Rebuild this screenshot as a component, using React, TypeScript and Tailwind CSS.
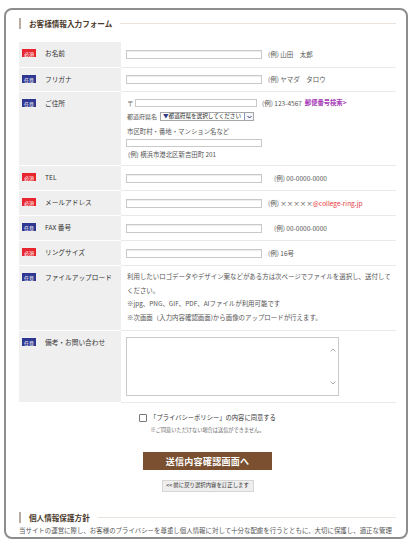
import type { ReactNode } from "react";

const jp = "font-['Noto_Sans_CJK_JP','Noto_Sans',sans-serif]";

function Badge({ req }: { req?: boolean }) {
  return (
    <span
      className={
        req
          ? "flex h-[8px] w-[14px] shrink-0 items-center justify-center bg-[#e8242e] text-[5px] leading-none text-white"
          : "flex h-[8px] w-[14px] shrink-0 items-center justify-center bg-[#2f3891] text-[5px] leading-none text-white"
      }
    >
      {req ? "必須" : "任意"}
    </span>
  );
}

function Row({
  req,
  label,
  height,
  cell,
  children,
}: {
  req?: boolean;
  label: string;
  height: string;
  cell: string;
  children: ReactNode;
}) {
  return (
    <div className={`flex ${height}`}>
      <div className="w-[102px] shrink-0 border-b border-white bg-[#efefef] pl-[3px] pt-[7px]">
        <div className="flex h-[8px] items-center gap-[9px]">
          <Badge req={req} />
          <span className="whitespace-nowrap text-[6.7px] leading-none text-[#333]">{label}</span>
        </div>
      </div>
      <div className={`flex-1 border-b border-[#e9e9e9] pl-[5px] ${cell}`}>{children}</div>
    </div>
  );
}

function Field({ w = "w-[136px]" }: { w?: string }) {
  return (
    <input
      type="text"
      className={`h-[9px] ${w} shrink-0 border border-[#c9c9c9] bg-white shadow-[inset_0_1px_1px_rgba(0,0,0,0.08)]`}
    />
  );
}

function Ex({ children, ml = "ml-[6px]" }: { children: ReactNode; ml?: string }) {
  return <span className={`${ml} whitespace-nowrap text-[6.5px] leading-none text-[#555]`}>{children}</span>;
}

function Heading({ text }: { text: string }) {
  return (
    <div className="flex h-[13px] items-center">
      <span className="h-[11px] w-[2px] bg-[#b9ada2]" />
      <span className="ml-[8px] whitespace-nowrap text-[7.6px] font-bold leading-none text-[#4b3a2c]">{text}</span>
      <span className="ml-[8px] h-px flex-1 bg-[#ebe3db]" />
    </div>
  );
}

export default function App() {
  return (
    <div className={`h-[546px] w-[417px] bg-white pl-[4px] pt-[8px] ${jp}`}>
      <div className="h-[531px] w-[404px] overflow-hidden rounded-[8px] border-2 border-[#8d8d8d] pl-[13px] pt-[7px]">
        <div className="w-[377px]">
          <Heading text="お客様情報入力フォーム" />

          <div className="mt-[12px]">
            <Row req label="お名前" height="h-[26px]" cell="flex items-center">
              <Field />
              <Ex>(例) 山田　太郎</Ex>
            </Row>
            <Row label="フリガナ" height="h-[24px]" cell="flex items-center">
              <Field />
              <Ex>(例) ヤマダ　タロウ</Ex>
            </Row>
            <Row label="ご住所" height="h-[74px]" cell="flex flex-col pt-[7px]">
              <div className="flex h-[8px] items-center">
                <span className="w-[9px] pl-[1px] text-[6.5px] leading-none text-[#666]">〒</span>
                <input
                  type="text"
                  className="h-[8px] w-[122px] border border-[#c9c9c9] bg-white"
                />
                <Ex ml="ml-[5px]">(例) 123-4567 </Ex>
                <span className="ml-[3px] whitespace-nowrap text-[6.3px] font-bold leading-none text-[#a437b5]">
                  郵便番号検索&gt;
                </span>
              </div>
              <div className="mt-[5px] flex h-[9px] items-center">
                <span className="w-[34px] pl-[1px] text-[6px] leading-none text-[#555]">都道府県名</span>
                <div className="flex h-[9px] w-[94px] items-center border border-[#a6a6a6] bg-white">
                  <span className="flex-1 whitespace-nowrap pl-[2px] text-[5.6px] leading-none text-[#222]">
                    <span className="text-[#2f3891]">▼</span>都道府県を選択してください
                  </span>
                  <span className="flex h-full w-[9px] items-center justify-center border-l border-[#8a96b8] bg-[#f4f6fb]">
                    <svg width="5" height="4" viewBox="0 0 5 4">
                      <path d="M0.5 1 L2.5 3 L4.5 1" fill="none" stroke="#2f3b6b" strokeWidth="1" />
                    </svg>
                  </span>
                </div>
              </div>
              <div className="mt-[7px] h-[8px] pl-[1px] text-[6.4px] leading-[8px] text-[#555]">
                市区町村・番地・マンション名など
              </div>
              <input
                type="text"
                className="mt-[3px] h-[8px] w-[136px] border border-[#c9c9c9] bg-white"
              />
              <div className="mt-[4px] h-[8px] pl-[2px] text-[6.4px] leading-[8px] text-[#555]">
                (例) 横浜市港北区新吉田町 201
              </div>
            </Row>
            <Row req label="TEL" height="h-[25px]" cell="flex items-center">
              <Field />
              <Ex ml="ml-[12px]">(例) 00-0000-0000</Ex>
            </Row>
            <Row req label="メールアドレス" height="h-[25px]" cell="flex items-center">
              <Field />
              <Ex>
                (例) ×××××<span className="text-[#e8383d]">@college-ring.jp</span>
              </Ex>
            </Row>
            <Row label="FAX 番号" height="h-[25px]" cell="flex items-center">
              <Field />
              <Ex ml="ml-[12px]">(例) 00-0000-0000</Ex>
            </Row>
            <Row req label="リングサイズ" height="h-[25px]" cell="flex items-center">
              <Field />
              <Ex>(例) 16号</Ex>
            </Row>
            <Row label="ファイルアップロード" height="h-[65px]" cell="pt-[4px]">
              <p className="pl-[1px] text-[6.45px] leading-[13.5px] text-[#555]">
                利用したいロゴデータやデザイン案などがある方は次ページでファイルを選択し、送付して
                <br />
                ください。
                <br />
                ※jpg、PNG、GIF、PDF、AIファイルが利用可能です
                <br />
                ※次画面（入力内容確認画面)から画像のアップロードが行えます。
              </p>
            </Row>
            <Row label="備考・お問い合わせ" height="h-[72px]" cell="pt-[6px]">
              <div className="flex h-[59px] w-[213px] justify-end border border-[#cacaca] bg-white">
                <div className="flex w-[10px] flex-col items-center justify-between py-[10px]">
                  <svg width="6" height="4" viewBox="0 0 6 4">
                    <path d="M0.5 3.5 L3 1 L5.5 3.5" fill="none" stroke="#9a9a9a" strokeWidth="0.8" />
                  </svg>
                  <svg width="6" height="4" viewBox="0 0 6 4">
                    <path d="M0.5 0.5 L3 3 L5.5 0.5" fill="none" stroke="#9a9a9a" strokeWidth="0.8" />
                  </svg>
                </div>
              </div>
            </Row>
          </div>

          <div className="mt-[10px] flex flex-col items-center">
            <div className="flex h-[10px] items-center gap-[3px]">
              <span className="h-[8px] w-[8px] rounded-[1px] border border-[#777] bg-white" />
              <span className="whitespace-nowrap text-[6.3px] leading-none text-[#333]">
                「プライバシーポリシー」の内容に同意する
              </span>
            </div>
            <div className="mt-[3px] h-[8px] whitespace-nowrap text-[5.2px] leading-[8px] text-[#666]">
              ※ご同意いただけない場合は送信ができません。
            </div>
            <button
              type="button"
              className="mt-[18px] flex h-[18px] w-[129px] items-center justify-center bg-[#7a5030] text-[9px] font-bold leading-none tracking-[0.3px] text-white"
            >
              送信内容確認画面へ
            </button>
            <button
              type="button"
              className="mt-[10px] flex h-[12px] w-[92px] items-center justify-center border border-[#d5d5d5] bg-[#eeeeee] text-[5.4px] leading-none text-[#333]"
            >
              &lt;&lt; 前に戻り選択内容を訂正します
            </button>
          </div>

          <div className="mt-[19px]">
            <Heading text="個人情報保護方針" />
          </div>
          <p className="mt-[2px] overflow-hidden whitespace-nowrap text-[6.45px] leading-[9px] text-[#555]">
            当サイトの運営に際し、お客様のプライバシーを尊重し個人情報に対して十分な配慮を行うとともに、大切に保護し、適正な管理
          </p>
        </div>
      </div>
    </div>
  );
}
